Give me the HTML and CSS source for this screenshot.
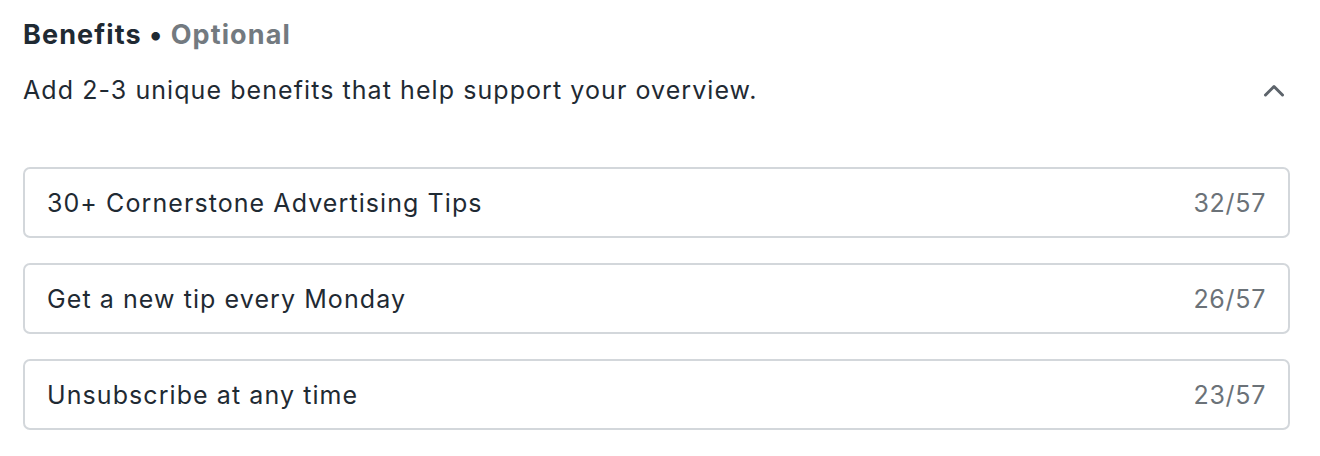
FILE: index.html
```html
<!DOCTYPE html>
<html>
<head>
<meta charset="utf-8">
<link rel="stylesheet" href="styles.css">
</head>
<body>
<section class="panel">
  <h2 class="title">Benefits <span class="dot">•</span> <span class="optional">Optional</span></h2>
  <div class="desc-row">
    <p class="desc">Add 2-3 unique benefits that help support your overview.</p>
    <svg class="chevron" width="22" height="13" viewBox="0 0 22 13"><path d="M2.5 11 L11 2.5 L19.5 11" fill="none" stroke="#5d646b" stroke-width="3" stroke-linecap="round" stroke-linejoin="round"/></svg>
  </div>
  <div class="fields">
    <div class="field"><span class="value">30+ Cornerstone Advertising Tips</span><span class="count">32/57</span></div>
    <div class="field"><span class="value">Get a new tip every Monday</span><span class="count">26/57</span></div>
    <div class="field"><span class="value">Unsubscribe at any time</span><span class="count">23/57</span></div>
  </div>
</section>
</body>
</html>
```
FILE: styles.css
```css
* { box-sizing: border-box; }
body { margin: 0; background: #fff; font-family: Inter, "Noto Sans", sans-serif; color: #1f2a33; }
.panel { padding: 18px 30px 0 23px; }
.title { margin: 0; font-size: 27px; font-weight: 700; line-height: 34px; color: #1f2a33; letter-spacing: 1.1px; }
.dot { font-weight: 700; }
.optional { color: #737a80; }
.desc-row { display: flex; align-items: center; justify-content: space-between; margin-top: 22px; padding-right: 5px; }
.desc { margin: 0; font-size: 25px; line-height: 32px; letter-spacing: 1.07px; }
.chevron { display: block; }
.fields { margin-top: 61px; display: flex; flex-direction: column; gap: 25px; width: 1267px; }
.field { height: 71px; border: 2px solid #d3d7db; border-radius: 7px; display: flex; align-items: center; justify-content: space-between; padding: 0 22px; font-size: 25px; letter-spacing: 1.08px; }
.value { color: #1f2a33; }
.count { color: #6b7278; letter-spacing: 0.7px; }
```
